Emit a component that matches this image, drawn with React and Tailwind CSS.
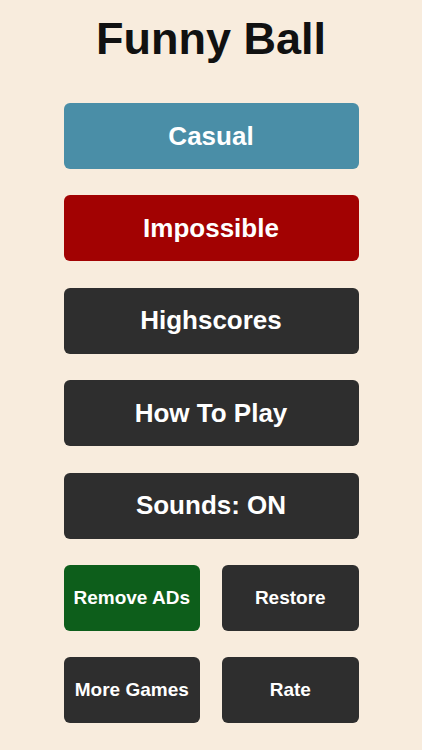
import React from "react";

const Btn = ({ label, className, small }) => (
  <button
    className={`flex h-[66px] items-center justify-center rounded-[6px] font-bold text-white ${
      small ? "text-[19px]" : "text-[26px]"
    } ${className}`}
  >
    {label}
  </button>
);

export default function App() {
  return (
    <div
      className="min-h-[750px] w-full bg-[#f8ecdd]"
      style={{ fontFamily: '"Liberation Sans", Arial, sans-serif' }}
    >
      <h1 className="pt-[10px] text-center text-[45px] font-bold leading-[58px] text-[#111]">
        Funny Ball
      </h1>
      <div className="mx-auto mt-[35px] flex w-[295px] flex-col gap-[26.4px]">
        <Btn label="Casual" className="bg-[#4a8ea7]" />
        <Btn label="Impossible" className="bg-[#a20202]" />
        <Btn label="Highscores" className="bg-[#2e2e2e]" />
        <Btn label="How To Play" className="bg-[#2e2e2e]" />
        <Btn label="Sounds: ON" className="bg-[#2e2e2e]" />
        <div className="grid grid-cols-2 gap-[22px]">
          <Btn small label="Remove ADs" className="bg-[#0d5e1b]" />
          <Btn small label="Restore" className="bg-[#2e2e2e]" />
        </div>
        <div className="grid grid-cols-2 gap-[22px]">
          <Btn small label="More Games" className="bg-[#2e2e2e]" />
          <Btn small label="Rate" className="bg-[#2e2e2e]" />
        </div>
      </div>
    </div>
  );
}
